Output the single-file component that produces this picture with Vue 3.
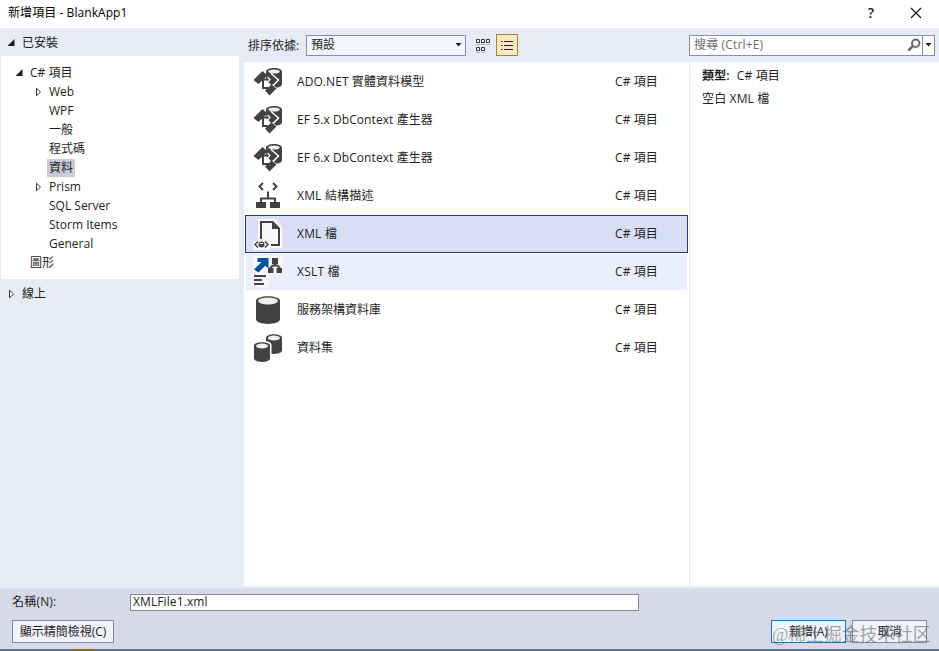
<template>
  <div class="dialog">
    <header class="titlebar">
      <span class="title">新增項目 - BlankApp1</span>
      <span class="help">?</span>
      <svg class="close" width="12" height="12" viewBox="0 0 12 12">
        <path d="M1 1L11 11M11 1L1 11" stroke="#111" stroke-width="1.1" fill="none" />
      </svg>
    </header>

    <div class="body">
      <aside class="sidebar">
        <div class="section">
          <svg class="arrow" width="8" height="8" viewBox="0 0 8 8"><path d="M7.500 0V7H0.5Z" fill="#1e1e1e" /></svg>
          <span>已安裝</span>
        </div>
        <ul class="tree">
          <li v-for="node in nodes" :key="node.name" :class="'level' + node.level">
            <span class="toggle">
              <svg v-if="node.state === 'open'" width="8" height="8" viewBox="0 0 8 8">
                <path d="M7.500 0V7H0.500Z" fill="#1e1e1e" />
              </svg>
              <svg v-else-if="node.state === 'closed'" width="8" height="10" viewBox="0 0 8 10">
                <path d="M2.500 1.200V8.800L6.500 5Z" fill="#fff" stroke="#333" />
              </svg>
            </span>
            <span class="label" :class="{ active: node.name === current }" @click="current = node.name">{{ node.name }}</span>
          </li>
        </ul>
        <div class="section online">
          <svg class="arrow" width="8" height="10" viewBox="0 0 8 10"><path d="M1.500 1.200V8.800L5.500 5Z" fill="#fff" stroke="#333" /></svg>
          <span>線上</span>
        </div>
      </aside>

      <main class="main">
        <div class="toolbar">
          <span class="sort-label">排序依據:</span>
          <div class="select">
            <span>預設</span>
            <svg width="7" height="4" viewBox="0 0 7 4"><path d="M0.5 0H6.5L3.5 3.5Z" fill="#1e1e1e" /></svg>
          </div>
          <svg class="grid-icon" width="14" height="15" viewBox="0 0 14 15">
            <g fill="#fff" stroke="#333">
              <path d="M.5 1.500h3v3h-3zM5.500 1.500h3v3h-3zM10.500 1.500h3v3h-3zM.5 9.500h3v3h-3zM5.500 9.500h3v3h-3z" />
              <path d="M0 6.500h4M5 6.500h4M10 6.500h4M0 14.500h4M5 14.500h4" stroke="#aab0be" />
            </g>
          </svg>
          <div class="list-button">
            <svg width="12" height="11" viewBox="0 0 12 11">
              <path d="M0 1.500h1.500M3 1.500h9M0 5.500h1.500M3 5.500h9M0 9.500h1.500M3 9.500h9" stroke="#222" fill="none" />
            </svg>
          </div>
          <div class="search">
            <input v-model="keyword" placeholder="搜尋 (Ctrl+E)">
            <svg class="glass" width="14" height="14" viewBox="0 0 14 14">
              <circle cx="8.700" cy="5.200" r="3.700" fill="#fff" stroke="#6a6a6a" stroke-width="2" />
              <path d="M5.900 8L1.300 12.600" stroke="#6a6a6a" stroke-width="2.600" />
            </svg>
            <span class="search-drop">
              <svg width="7" height="4" viewBox="0 0 7 4"><path d="M0.5 0H6.500L3.500 3.500Z" fill="#1e1e1e" /></svg>
            </span>
          </div>
        </div>

        <div class="content">
          <ul class="items">
            <li
              v-for="item in items"
              :key="item.name"
              :class="{ selected: item.name === selected, hover: item.name === hovered }"
              @click="selected = item.name"
            >
              <svg class="icon" width="32" height="32" viewBox="0 0 32 32">
                <g v-if="item.icon === 'entity'">
                  <path d="M14 5.500C14 0.700 30 0.700 30 5.500V18C30 20 27.500 21.500 24 21.500L14 12Z" fill="#424242" />
                  <ellipse cx="22" cy="5.500" rx="5.800" ry="2.100" fill="#f0eff1" />
                  <path d="M19 7.500L26.500 14L18.500 22" fill="none" stroke="#fff" stroke-width="1.500" />
                  <path d="M1.500 14L10.500 5L15.500 9.500L6.500 18Z" fill="#424242" />
                  <path d="M11 13.500H17M11 12.500V22H16.500" fill="none" stroke="#424242" stroke-width="2" />
                  <path d="M14.500 14L19.500 9L24.500 14L19.500 19.500Z" fill="#424242" />
                  <path d="M15.500 11L18 13.500L14 17.500" fill="none" stroke="#fff" stroke-width="1.200" />
                  <path d="M13 24.500L19.500 18.500L24.500 22.500L17.500 29.500Z" fill="#424242" />
                </g>
                <g v-else-if="item.icon === 'schema'">
                  <path d="M11 3L7.500 6.500L11 10M21 3L24.500 6.500L21 10" fill="none" stroke="#424242" stroke-width="2" />
                  <path d="M16 11.500V18M9 23V18.500H23V23" fill="none" stroke="#424242" stroke-width="2" />
                  <path d="M4 22h10v6H4zM18 22h10v6H18z" fill="#424242" />
                </g>
                <g v-else-if="item.icon === 'xml'">
                  <path d="M6 1H23L30 8V30H18V32H1V23H6Z" fill="#f8f8fb" />
                  <path d="M8 3H21L28 10V28H19V26H26V11H20V5H10V21H8Z" fill="#424242" />
                  <path d="M20 3L28 10.500H20Z" fill="#424242" />
                  <path d="M6 23.500L3 26.500L6 29.500M13 23.500L16 26.500L13 29.500" fill="none" stroke="#424242" stroke-width="1.500" />
                  <ellipse cx="9.500" cy="26.500" rx="3" ry="3" fill="#424242" />
                  <path d="M8 25.500h3" stroke="#fff" />
                </g>
                <g v-else-if="item.icon === 'xslt'">
                  <path d="M1 0H31V18H17V31H1Z" fill="#f8f8fc" />
                  <path d="M5.500 2H16.500V12.500L13.200 9.800L6.500 16.500L2 13.500L9.500 6H5.500Z" fill="#00539c" />
                  <path d="M20 2h6v6h-6zM16 12h5.500v5H16zM24.500 12h5.500v5h-5.500z" fill="#424242" />
                  <path d="M23 7V10M18.500 14V11.500L21 9.500H25L27.500 11.500V14" stroke="#424242" stroke-width="2" fill="none" />
                  <path d="M2 20h12M2 24h8M2 28h10" stroke="#424242" stroke-width="2" />
                </g>
                <g v-else-if="item.icon === 'database'">
                  <path d="M4 7C4 0.800 28 0.800 28 7V25C28 31.500 4 31.500 4 25Z" fill="#424242" />
                  <ellipse cx="16" cy="7" rx="10" ry="3.400" fill="#f0eff1" />
                </g>
                <g v-else>
                  <path d="M14 6C14 1 30 1 30 6V18.500C30 23 14 23 14 18.500Z" fill="#424242" />
                  <ellipse cx="22" cy="6" rx="6" ry="2.400" fill="#f0eff1" />
                  <path d="M0 13C0 7 19.500 7 19.500 13V27H0Z" fill="#fff" />
                  <path d="M2 13.500C2 9 18 9 18 13.500V26.500C18 31 2 31 2 26.500Z" fill="#424242" />
                  <ellipse cx="10" cy="14" rx="6" ry="2.400" fill="#f0eff1" />
                </g>
              </svg>
              <span class="name" :class="item.icon">{{ item.name }}</span>
              <span class="lang">C# 項目</span>
            </li>
          </ul>
          <section class="details">
            <p><b>類型:</b><span>C# 項目</span></p>
            <p>空白 XML 檔</p>
          </section>
        </div>
      </main>
    </div>

    <footer class="footer">
      <div class="field">
        <label for="name">名稱(N):</label>
        <input id="name" v-model="fileName" type="text">
      </div>
      <div class="actions">
        <button class="compact" type="button">顯示精簡檢視(C)</button>
        <button class="add" type="button">新增(A)</button>
        <button class="cancel" type="button">取消</button>
      </div>
      <div class="watermark">@稀土掘金技术社区</div>
    </footer>
    <div class="edge"><span></span></div>
  </div>
</template>

<script setup>
import { ref } from 'vue';

const nodes = [
  { name: 'C# 項目', level: 0, state: 'open' },
  { name: 'Web', level: 1, state: 'closed' },
  { name: 'WPF', level: 1 },
  { name: '一般', level: 1 },
  { name: '程式碼', level: 1 },
  { name: '資料', level: 1 },
  { name: 'Prism', level: 1, state: 'closed' },
  { name: 'SQL Server', level: 1 },
  { name: 'Storm Items', level: 1 },
  { name: 'General', level: 1 },
  { name: '圖形', level: 0 }
];

const items = [
  { name: 'ADO.NET 實體資料模型', icon: 'entity' },
  { name: 'EF 5.x DbContext 產生器', icon: 'entity' },
  { name: 'EF 6.x DbContext 產生器', icon: 'entity' },
  { name: 'XML 結構描述', icon: 'schema' },
  { name: 'XML 檔', icon: 'xml' },
  { name: 'XSLT 檔', icon: 'xslt' },
  { name: '服務架構資料庫', icon: 'database' },
  { name: '資料集', icon: 'dataset' }
];

const current = ref('資料');
const selected = ref('XML 檔');
const hovered = ref('XSLT 檔');
const keyword = ref('');
const fileName = ref('XMLFile1.xml');
</script>

<style>
body {
  margin: 0;
  overflow: hidden;
}
</style>

<style scoped>
* {
  box-sizing: border-box;
}

.dialog {
  display: flex;
  flex-direction: column;
  width: 939px;
  height: 651px;
  background: #e6ebf5;
  color: #1e1e1e;
  font: 12px/18px "Open Sans", "Noto Sans CJK TC", sans-serif;
}

.dialog svg {
  display: block;
  flex: none;
}

ul,
p {
  margin: 0;
  padding: 0;
  list-style: none;
}

.titlebar {
  display: flex;
  align-items: center;
  height: 28px;
  padding: 0 17px 3px 8px;
  background: #fff;
}

.title {
  flex: 1;
  color: #000;
  letter-spacing: 0.07px;
}

.help {
  margin-right: 36px;
  font-size: 14px;
  font-weight: 600;
}

.body {
  display: flex;
  height: 560px;
}

.sidebar {
  width: 244px;
}

.section {
  display: flex;
  align-items: center;
  gap: 7px;
  height: 28px;
  padding: 1px 0 0 7px;
}

.section.online {
  padding-left: 8px;
  gap: 6px;
}

.tree {
  width: 238px;
  height: 223px;
  margin-left: 1px;
  padding-top: 7px;
  background: #fff;
}

.tree li {
  display: flex;
  align-items: center;
  height: 19px;
}

.level0 {
  padding-left: 14px;
}

.level1 {
  padding-left: 33px;
}

.toggle {
  width: 13px;
}

.label {
  height: 18px;
  padding: 0 2px;
}

.label.active {
  background: #c9cbd8;
}

.main {
  width: 695px;
}

.toolbar {
  display: flex;
  align-items: center;
  height: 34px;
  padding: 0 4px;
}

.sort-label {
  width: 58px;
  padding-top: 1px;
}

.select {
  display: flex;
  align-items: center;
  justify-content: space-between;
  width: 160px;
  height: 21px;
  padding: 0 3px 0 4px;
  background: #f3f6fd;
  border: 1px solid #8591a8;
}

.grid-icon {
  margin-left: 10px;
}

.list-button {
  display: flex;
  align-items: center;
  justify-content: center;
  width: 22px;
  height: 22px;
  margin-left: 6px;
  background: #fde8c4;
  border: 1px solid #a5822e;
}

.search {
  display: flex;
  align-items: center;
  width: 246px;
  height: 21px;
  margin-left: auto;
  background: #fff;
  border: 1px solid #8591a8;
}

.search input {
  flex: 1;
  min-width: 0;
  padding: 0 4px;
  border: 0;
  background: none;
  font: inherit;
  letter-spacing: 0.15px;
}

.search input::placeholder {
  color: #6d6d6d;
}

.search-drop {
  display: flex;
  align-items: center;
  height: 19px;
  margin-left: 1px;
  padding: 0 2px;
  border-left: 1px solid #8591a8;
}

.content {
  display: flex;
  height: 524px;
  background: #fff;
}

.items {
  width: 446px;
  padding: 1px 1px 0;
  border-right: 1px solid #e6ebf5;
}

.items li {
  display: flex;
  align-items: center;
  height: 38px;
  padding-left: 6px;
  border: 1px solid transparent;
}

.items li.selected {
  background: #d8dff5;
  border-color: #2b3a70;
}

.items li.hover {
  background: #eaeffd;
  background-clip: padding-box;
}

.name {
  width: 331px;
  padding-left: 13px;
}

.name.entity {
  letter-spacing: 0.08px;
}

.name.schema,
.name.xml,
.name.xslt {
  letter-spacing: 0.2px;
}

.lang {
  letter-spacing: 0.1px;
}

.details {
  padding: 5px 12px;
}

.details p {
  height: 23px;
  letter-spacing: 0.15px;
}

.details b {
  margin-right: 7px;
  font-weight: 600;
}

.footer {
  position: relative;
  height: 61px;
  background: #d6dae8;
  border-top: 1px solid #dce1ed;
}

.field {
  display: flex;
  align-items: center;
  height: 26px;
  padding-left: 12px;
}

.field label {
  width: 118px;
  letter-spacing: 0.2px;
}

.field input {
  width: 509px;
  height: 17px;
  padding: 0 2px;
  border: 1px solid #858a99;
  background: #fff;
  color: #1e1e1e;
  font: inherit;
  letter-spacing: 0.1px;
}

.actions {
  display: flex;
  padding: 5px 12px 0;
}

.actions button {
  width: 75px;
  height: 23px;
  padding: 0;
  border: 1px solid #858a99;
  background: #f0f3fb;
  color: #1e1e1e;
  font: inherit;
}

.actions .compact {
  width: 102px;
}

.actions .add {
  margin-left: auto;
  margin-right: 6px;
  border-color: #1874bd;
}

.watermark {
  position: absolute;
  top: 35px;
  left: 772px;
  color: rgba(90, 90, 90, 0.55);
  font: 17.8px/22px "Liberation Serif", "Noto Sans CJK SC", serif;
  white-space: nowrap;
}

.edge {
  height: 2px;
  padding-left: 72px;
  background: #65728f;
}

.edge span {
  display: block;
  width: 22px;
  height: 2px;
  background: #8b6a24;
}
</style>
